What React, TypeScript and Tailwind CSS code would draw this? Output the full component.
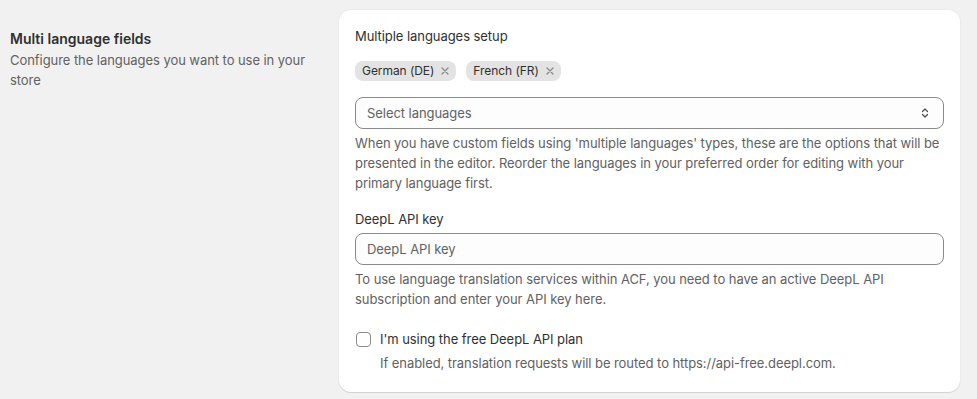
import React from "react";

function Tag({ label }: { label: string }) {
  return (
    <span className="inline-flex h-[20px] items-center gap-[6px] rounded-[8px] bg-[#e3e3e3] pl-[7px] pr-[6px] text-[12px] text-[#303030]">
      {label}
      <svg width="10" height="10" viewBox="0 0 10 10" className="text-[#8a8a8a]">
        <path d="M2 2 L8 8 M8 2 L2 8" stroke="currentColor" strokeWidth="1.3" strokeLinecap="round" />
      </svg>
    </span>
  );
}

export default function App() {
  return (
    <div
      className="min-h-[399px] w-full bg-[#f1f1f1] text-[13px] leading-[20px] tracking-[-0.06px] text-[#303030]"
      style={{ fontFamily: "Inter, 'Noto Sans', sans-serif" }}
    >
      <div className="flex gap-[12px] pl-[10px] pr-[17px] pt-[10px]">
        <div className="w-[317px] shrink-0 pt-[19px]">
          <div className="mb-[1px] text-[14px] font-semibold leading-[20px] tracking-normal">Multi language fields</div>
          <div className="text-[#616161]">Configure the languages you want to use in your store</div>
        </div>
        <div className="flex flex-1 flex-col rounded-[12px] bg-white px-[16px] pb-[19px] pt-[16px] shadow-[0_1px_0_0_#d4d4d4,0_0_0_1px_#ebebeb]">
          <div>Multiple languages setup</div>
          <div className="mt-[15px] flex gap-[10px]">
            <Tag label="German (DE)" />
            <Tag label="French (FR)" />
          </div>
          <div className="mt-[16px] flex h-[32px] items-center justify-between rounded-[8px] border border-[#8a8a8a] bg-[#fdfdfd] pl-[11px] pr-[12px] text-[#616161]">
            <span>Select languages</span>
            <svg width="12" height="14" viewBox="0 0 12 14" className="text-[#4a4a4a]">
              <path d="M3.5 5.5 L6 3 L8.5 5.5 M3.5 8.5 L6 11 L8.5 8.5" fill="none" stroke="currentColor" strokeWidth="1.2" strokeLinecap="round" strokeLinejoin="round" />
            </svg>
          </div>
          <p className="mt-[4px] text-[#616161]">
            When you have custom fields using 'multiple languages' types, these are the options that will be presented in the editor. Reorder the languages in your preferred order for editing with your primary language first.
          </p>
          <div className="mt-[16px]">DeepL API key</div>
          <div className="mt-[4px] flex h-[32px] items-center rounded-[8px] border border-[#8a8a8a] bg-[#fdfdfd] pl-[11px] text-[#616161]">
            DeepL API key
          </div>
          <p className="mt-[4px] text-[#616161]">
            To use language translation services within ACF, you need to have an active DeepL API subscription and enter your API key here.
          </p>
          <div className="mt-[20px] flex items-center gap-[9px]">
            <span className="ml-[1px] h-[15px] w-[15px] rounded-[4px] border border-[#8a8a8a] bg-white" />
            <span>I'm using the free DeepL API plan</span>
          </div>
          <div className="mt-[4px] pl-[25px] text-[#616161]">
            If enabled, translation requests will be routed to https://api-free.deepl.com.
          </div>
        </div>
      </div>
    </div>
  );
}
